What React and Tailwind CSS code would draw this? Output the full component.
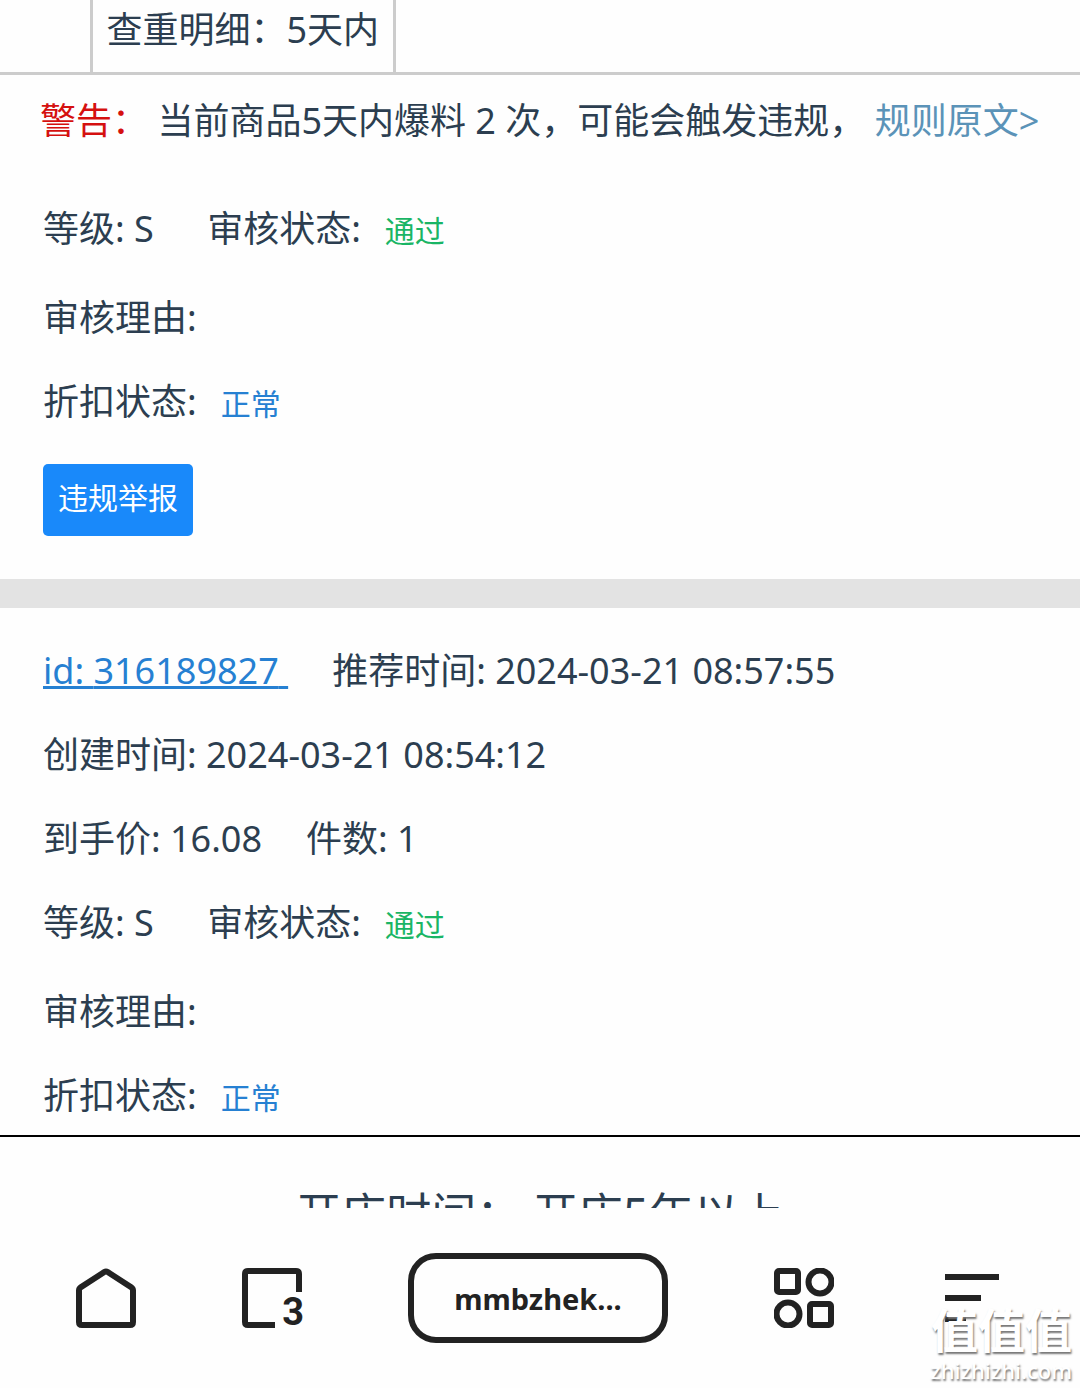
const RECORDS = [
  { grade: 'S', status: '通过', reason: '', discount: '正常' },
  {
    id: '316189827',
    recommended: '2024-03-21 08:57:55',
    created: '2024-03-21 08:54:12',
    price: '16.08',
    count: 1,
    grade: 'S',
    status: '通过',
    reason: '',
    discount: '正常',
  },
]

function Row({ children }) {
  return <div className="flex items-start gap-11 leading-[84px] whitespace-pre">{children}</div>
}

function Tag({ className, children }) {
  return <span className={`ml-6 text-[30px] leading-none ${className}`}>{children}</span>
}

function ReviewRows({ record }) {
  return (
    <>
      <div className="pb-[5px]">
        <Row>
          <span>等级: {record.grade} </span>
          <span>
            审核状态:<Tag className="text-[#19b565]">{record.status}</Tag>
          </span>
        </Row>
      </div>
      <Row>
        <span>审核理由: {record.reason}</span>
      </Row>
      <Row>
        <span>
          折扣状态:<Tag className="text-[#2680d2]">{record.discount}</Tag>
        </span>
      </Row>
    </>
  )
}

function HomeIcon() {
  return (
    <svg width="60" height="60" viewBox="0 0 60 60" fill="none" stroke="currentColor" strokeWidth="6" strokeLinejoin="round">
      <path d="M3 22.5Q3 20.5 4.8 19.3L28.3 4.1Q30 3 31.7 4.1L55.2 19.3Q57 20.5 57 22.5V54Q57 57 54 57H6Q3 57 3 54Z" />
    </svg>
  )
}

function TabsIcon() {
  return (
    <svg width="60" height="60" viewBox="0 0 60 60" fill="none" stroke="currentColor" strokeWidth="6">
      <path d="M57 24V6Q57 3 54 3H6Q3 3 3 6V54Q3 57 6 57H33" />
    </svg>
  )
}

function AppsIcon() {
  return (
    <svg width="60" height="60" viewBox="0 0 60 60" fill="none" stroke="currentColor" strokeWidth="6">
      <rect x="3" y="3" width="21" height="21" rx="2" />
      <circle cx="46" cy="14" r="11.5" />
      <circle cx="14" cy="46" r="11.5" />
      <rect x="36" y="36" width="21" height="21" rx="2" />
    </svg>
  )
}

function MenuIcon() {
  return (
    <svg width="60" height="60" viewBox="0 0 60 60" fill="currentColor">
      <path d="M5 6H59V12H5ZM5 27H41V33H5ZM5 48H26V54H5Z" />
    </svg>
  )
}

function BottomNav() {
  return (
    <nav className="flex h-[180px] shrink-0 items-center justify-between pr-20 pl-[76px] text-[#222]">
      <button aria-label="Home"><HomeIcon /></button>
      <button aria-label="Tabs" className="relative">
        <TabsIcon />
        <span className="absolute -right-[2px] -bottom-1 font-[Roboto] text-[38px] leading-[40px] font-bold">3</span>
      </button>
      <button className="h-[90px] w-[260px] rounded-[28px] border-6 border-[#222] pt-[2px] font-['Noto_Sans',sans-serif] text-[29px] font-bold">
        mmbzhek...
      </button>
      <button aria-label="Apps"><AppsIcon /></button>
      <button aria-label="Menu"><MenuIcon /></button>
    </nav>
  )
}

export default function App() {
  return (
    <div className="relative flex h-screen flex-col overflow-hidden bg-[#fefefe] font-['Noto_Sans','Noto_Sans_CJK_SC',sans-serif] text-[36px] text-[#2c3e50]">
      <main className="min-h-0 flex-1 overflow-hidden">
        <table className="w-full border-collapse border-b-3 border-[#ccc]">
          <tbody>
            <tr>
              <td className="w-[91px]" />
              <td className="w-px border-x-3 border-[#ccc] px-3.5 pt-1 pb-4 leading-[52px] whitespace-nowrap">
                查重明细：5天内
              </td>
              <td />
            </tr>
          </tbody>
        </table>

        <p className="px-10 pt-5 pb-[40px] leading-[52px] whitespace-nowrap">
          <span className="text-[#d5100f]">警告：</span> 当前商品5天内爆料 2 次，可能会触发违规，{' '}
          <a href="#rules" className="text-[#5b93b8]">规则原文&gt;</a>
        </p>

        <section className="border-b-[29px] border-[#e3e3e3] px-[43px] pb-[43px]">
          <ReviewRows record={RECORDS[0]} />
          <button className="mt-5 block h-[72px] rounded-[5px] bg-[#1989fa] px-[15px] pb-1 text-[30px] leading-[60px] text-white">
            违规举报
          </button>
        </section>

        <section className="px-[43px] pt-[21px]">
          <Row>
            <a href="#316189827" className="text-[#2680d2] underline">id: {RECORDS[1].id} </a>
            <span>推荐时间: {RECORDS[1].recommended}</span>
          </Row>
          <Row>
            <span>创建时间: {RECORDS[1].created}</span>
          </Row>
          <Row>
            <span>到手价: {RECORDS[1].price}</span>
            <span>件数: {RECORDS[1].count}</span>
          </Row>
          <ReviewRows record={RECORDS[1]} />
        </section>
      </main>

      {/* shop info strip, cut off by the browser bar */}
      <div className="h-[73px] shrink-0 overflow-hidden border-t-2 border-black pt-[47px] text-center text-[45px] leading-[60px]">
        开店时间： 开店5年以上
      </div>

      <BottomNav />

      <div className="pointer-events-none absolute right-2 bottom-1 text-right text-white text-shadow-[1px_2px_2px_#777]">
        <div className="text-[47px] leading-[52px] font-bold">值值值</div>
        <div className="text-[22px] leading-[28px] font-medium">zhizhizhi.com</div>
      </div>
    </div>
  )
}
